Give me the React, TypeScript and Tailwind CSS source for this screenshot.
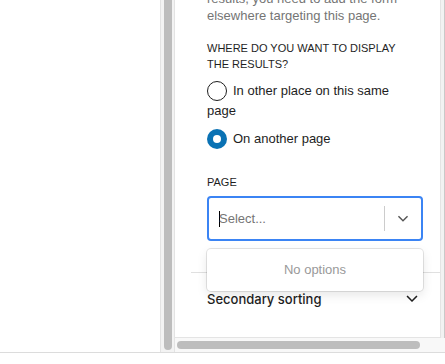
import React from 'react';

const sans = { fontFamily: '"Liberation Sans", Arial, sans-serif' };

function Chevron({ className }: { className?: string }) {
  return (
    <svg className={className} viewBox="0 0 24 24" width="24" height="24" fill="none">
      <path d="M17.5 11.6 16.4 10.5 12 14.9 7.6 10.5 6.5 11.6 12 17z" fill="currentColor" transform="translate(0 -2)" />
    </svg>
  );
}

function Radio({ checked }: { checked?: boolean }) {
  return checked ? (
    <span className="inline-flex align-top w-5 h-5 rounded-full bg-[#0a72b4] items-center justify-center mr-[6px]">
      <span className="w-[8px] h-[8px] rounded-full bg-white" />
    </span>
  ) : (
    <span className="inline-block align-top w-5 h-5 rounded-full border-[1.5px] border-[#1e1e1e] bg-white mr-[6px]" />
  );
}

export default function App() {
  return (
    <div className="w-[445px] h-[364px] bg-white overflow-hidden text-[13px] text-[#1e1e1e]" style={sans}>
      <div className="flex h-[353px] border-b border-[#dcdcdc]">
        {/* empty left side */}
        <div className="w-[160px] shrink-0" />

        {/* vertical scrollbar */}
        <div className="w-[15px] shrink-0 bg-[#f3f3f3] border-l border-r border-[#e3e3e3] flex justify-center pb-[2px]">
          <div className="w-[8px] h-full rounded-b-full bg-[#bdbdbd]" />
        </div>

        <div className="flex-1 flex flex-col min-w-0">
          <div className="flex flex-1 min-h-0">
            {/* sidebar panel */}
            <div className="flex-1 bg-white border-r border-b border-[#e4e4e4] pl-4 overflow-hidden">
              <div className="px-4 pb-[31px]">
                <p className="-mt-[10px] leading-[17px] text-[#757575]">
                  results, you need to add the form
                  <br />
                  elsewhere targeting this page.
                </p>

                <div className="mt-[16px] w-[200px] text-[11px] leading-4 uppercase text-[#1e1e1e]">
                  Where do you want to display the results?
                </div>

                <div className="mt-[9px] w-[205px] leading-5">
                  <Radio />
                  In other place on this same page
                </div>
                <div className="mt-[8px] leading-5 flex items-center">
                  <Radio checked />
                  On another page
                </div>

                <div className="mt-[25px] text-[11px] leading-4 uppercase">Page</div>

                <div className="relative mt-[6px] w-[216px]">
                  <div className="h-[45px] border-2 border-[#3b84f4] rounded-[4px] flex items-center">
                    <div className="flex-1 flex items-center pl-[10px] text-[#757575]">
                      <span className="w-px h-[16px] bg-black -mr-px" />
                      <span>Select...</span>
                    </div>
                    <span className="w-px h-[25px] bg-[#cccccc]" />
                    <div className="w-[36px] flex justify-center text-[#555555]">
                      <Chevron className="w-[22px] h-[22px]" />
                    </div>
                  </div>

                  <div className="absolute left-0 right-0 top-full mt-[8px] h-[42px] bg-white rounded-[4px] shadow-[0_0_0_1px_rgba(0,0,0,0.1),0_4px_11px_rgba(0,0,0,0.1)] flex items-center justify-center text-[#999999] z-10">
                    No options
                  </div>
                </div>
              </div>

              <div className="border-t border-[#e0e0e0] px-4 pt-[14px] flex items-center justify-between">
                <span className="leading-5 font-medium" style={{ fontFamily: 'Inter, "Liberation Sans", sans-serif' }}>
                  Secondary sorting
                </span>
                <Chevron className="w-6 h-6 text-[#1e1e1e]" />
              </div>
            </div>
            {/* sliver of the next scroll container */}
            <div className="w-[4px] shrink-0 bg-[#f2f2f2] border-r border-[#c9c9c9]" />
          </div>

          {/* horizontal scrollbar */}
          <div className="h-[14px] shrink-0 bg-[#f8f8f8] flex items-center pl-[2px]">
            <div className="w-[243px] h-[8px] rounded-full bg-[#bdbdbd]" />
          </div>
        </div>
      </div>
    </div>
  );
}
